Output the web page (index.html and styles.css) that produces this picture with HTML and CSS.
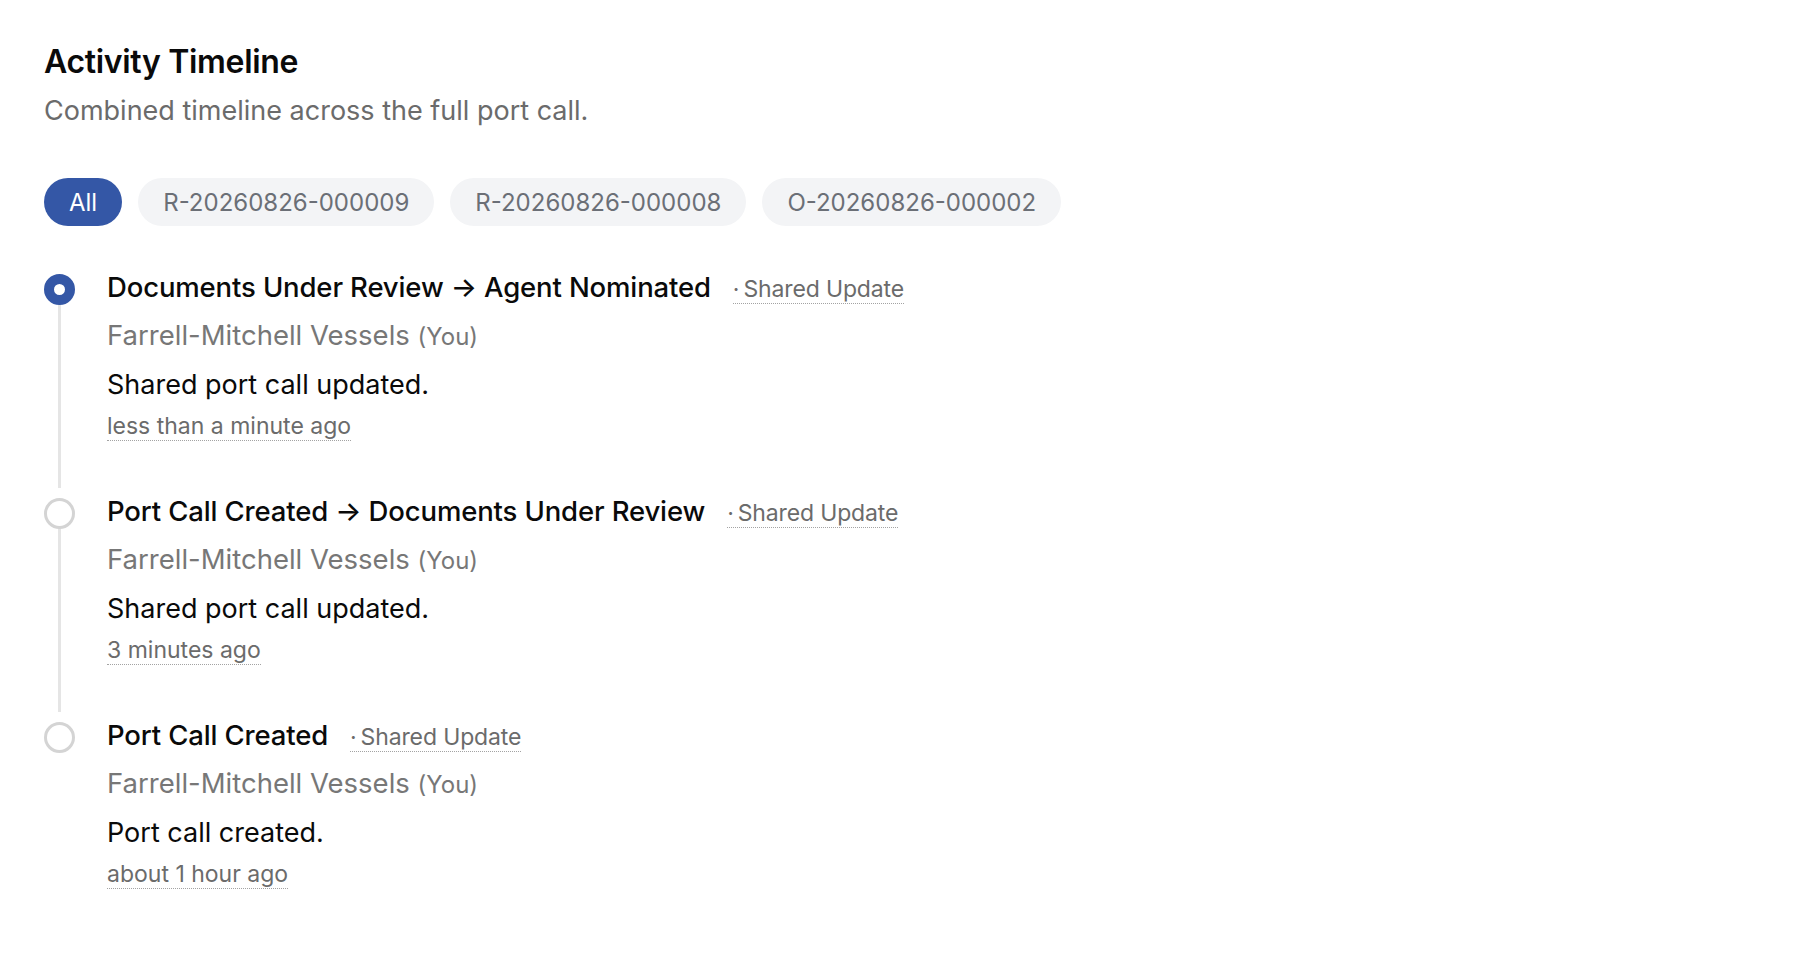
FILE: index.html
```html
<!DOCTYPE html>
<html lang="en">
<head>
    <meta charset="UTF-8">
    <meta name="viewport" content="width=device-width, initial-scale=1.0">
    <title>Activity Timeline</title>
    <link rel="stylesheet" href="styles.css">
</head>
<body>
    <div class="panel">
        <h1>Activity Timeline</h1>
        <p class="subtitle">Combined timeline across the full port call.</p>

        <div class="filters">
            <button class="pill active">All</button>
            <button class="pill">R-20260826-000009</button>
            <button class="pill">R-20260826-000008</button>
            <button class="pill">O-20260826-000002</button>
        </div>

        <div class="timeline">
            <div class="item current">
                <div class="marker"><span class="dot"></span></div>
                <div class="item-body">
                    <div class="item-title">
                        <span>Documents Under Review &rarr; Agent Nominated</span>
                        <span class="tag">&middot;&thinsp;Shared Update</span>
                    </div>
                    <div class="author">Farrell-Mitchell Vessels <small>(You)</small></div>
                    <div class="desc">Shared port call updated.</div>
                    <div class="time"><span>less than a minute ago</span></div>
                </div>
            </div>

            <div class="item">
                <div class="marker"><span class="dot"></span></div>
                <div class="item-body">
                    <div class="item-title">
                        <span>Port Call Created &rarr; Documents Under Review</span>
                        <span class="tag">&middot;&thinsp;Shared Update</span>
                    </div>
                    <div class="author">Farrell-Mitchell Vessels <small>(You)</small></div>
                    <div class="desc">Shared port call updated.</div>
                    <div class="time"><span>3 minutes ago</span></div>
                </div>
            </div>

            <div class="item last">
                <div class="marker"><span class="dot"></span></div>
                <div class="item-body">
                    <div class="item-title">
                        <span>Port Call Created</span>
                        <span class="tag">&middot;&thinsp;Shared Update</span>
                    </div>
                    <div class="author">Farrell-Mitchell Vessels <small>(You)</small></div>
                    <div class="desc">Port call created.</div>
                    <div class="time"><span>about 1 hour ago</span></div>
                </div>
            </div>
        </div>
    </div>
</body>
</html>
```

FILE: styles.css
```css
* {
    margin: 0;
    padding: 0;
    box-sizing: border-box;
}

body {
    font-family: 'Inter', 'Noto Sans', sans-serif;
    background: #fff;
    color: #0a0a0a;
}

.panel {
    padding: 42px 44px 60px;
}

.panel h1 {
    font-size: 32px;
    line-height: 40px;
    font-weight: 600;
    letter-spacing: -0.01em;
}

.subtitle {
    margin-top: 13px;
    font-size: 27px;
    line-height: 32px;
    color: #6b6b6b;
}

.filters {
    display: flex;
    gap: 16px;
    margin-top: 51px;
}

.pill {
    height: 48px;
    padding: 0 25px;
    border: none;
    border-radius: 24px;
    background: #f3f4f6;
    color: #6b6f76;
    font-family: inherit;
    font-size: 24px;
}

.pill.active {
    background: #3457a6;
    color: #fff;
}

.timeline {
    margin-top: 43px;
}

.item {
    display: flex;
    gap: 32px;
    padding-bottom: 51px;
    position: relative;
}

.item::before {
    content: '';
    position: absolute;
    left: 14px;
    top: 21px;
    bottom: 5px;
    width: 3px;
    background: #e5e5e5;
}

.item.last::before {
    display: none;
}

.marker {
    width: 31px;
    flex-shrink: 0;
    padding-top: 5px;
}

.dot {
    display: block;
    position: relative;
    width: 31px;
    height: 31px;
    border-radius: 50%;
    border: 3px solid #d4d4d4;
    background: #fff;
}

.item.current .dot {
    border: 10px solid #3457a6;
}

.item-title {
    display: flex;
    align-items: baseline;
    gap: 22px;
    font-size: 27.5px;
    line-height: 36px;
    font-weight: 500;
    letter-spacing: -0.005em;
}

.tag {
    font-size: 23px;
    font-weight: 400;
    color: #6b6b6b;
    border-bottom: 1px dotted #a3a3a3;
    line-height: 28px;
}

.author {
    margin-top: 12px;
    font-size: 27.5px;
    line-height: 36px;
    color: #777;
}

.author small {
    font-size: 24px;
}

.desc {
    margin-top: 12px;
    font-size: 27px;
    line-height: 36px;
}

.time {
    margin-top: 7px;
    font-size: 23px;
    line-height: 32px;
    color: #6b6b6b;
}

.time span {
    border-bottom: 1px dotted #a3a3a3;
}
```
